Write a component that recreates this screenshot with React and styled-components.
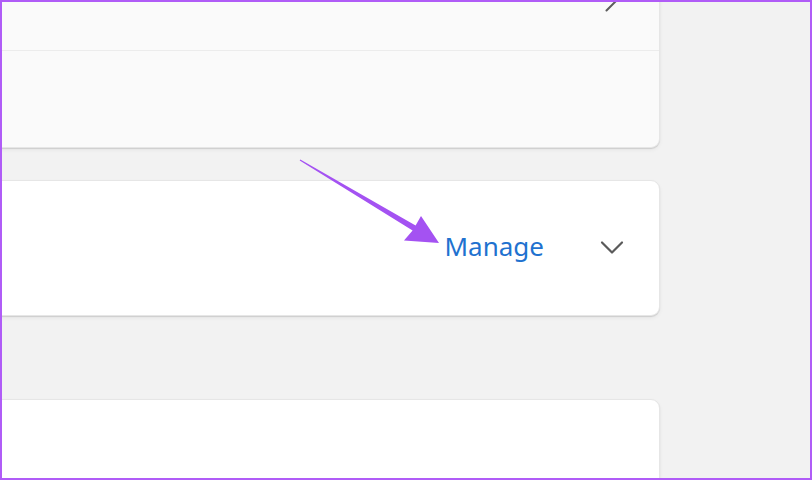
import React from 'react';
import styled, { createGlobalStyle } from 'styled-components';

const GlobalStyle = createGlobalStyle`
  html, body {
    margin: 0;
    padding: 0;
    background: #f2f2f2;
  }
  body {
    font-family: "Noto Sans", "Open Sans", "Liberation Sans", sans-serif;
  }
`;

function ChevronRight() {
  return (
    <svg width="24" height="24" viewBox="0 0 24 24" fill="none">
      <path d="M6.5 1.5 L17 12 L6.5 22.5" stroke="#5c5c5c" strokeWidth="2" strokeLinecap="round" strokeLinejoin="round" />
    </svg>
  );
}

function ChevronDown() {
  return (
    <svg width="24" height="24" viewBox="0 0 24 24" fill="none">
      <path d="M2 6.5 L12 16.5 L22 6.5" stroke="#5a5a5a" strokeWidth="2.2" strokeLinecap="round" strokeLinejoin="round" />
    </svg>
  );
}

function App() {
  return (
    <>
      <GlobalStyle />
      <Styled.Frame>
        <Styled.Column>
          <Styled.Card tone="#fafafa">
            <Styled.Row height={100}>
              <Styled.IconSlot>
                <ChevronRight />
              </Styled.IconSlot>
            </Styled.Row>
            <Styled.Divider />
            <Styled.Row height={96} />
          </Styled.Card>

          <Styled.Card tone="#ffffff" gap={32}>
            <Styled.Row height={134}>
              <Styled.Link href="#">Manage</Styled.Link>
              <Styled.IconSlot>
                <ChevronDown />
              </Styled.IconSlot>
            </Styled.Row>
          </Styled.Card>

          <Styled.Card tone="#ffffff" gap={83}>
            <Styled.Row height={120} />
          </Styled.Card>
        </Styled.Column>

        <Styled.Arrow viewBox="0 0 812 480">
          <path d="M300.3 159.6 L415.6 225.6 L421 216 L439 243 L404 240.5 L412.6 230.4 L299.7 160.4 Z" fill="#a452f2" />
        </Styled.Arrow>
      </Styled.Frame>
    </>
  );
}

const Styled = {
  Frame: styled.div`
    position: relative;
    box-sizing: border-box;
    width: 812px;
    height: 480px;
    border: 2px solid #b05cf7;
    background: #f2f2f2;
    overflow: hidden;
  `,
  Column: styled.div`
    display: flex;
    flex-direction: column;
    width: 680px;
    margin-left: -22px;
    margin-top: -53px;
  `,
  Card: styled.div`
    margin-top: ${p => p.gap || 0}px;
    background: ${p => p.tone};
    border: 1px solid #e6e6e6;
    border-radius: 9px;
    box-shadow: 0 1px 1px rgba(0, 0, 0, 0.12), 0 2px 4px rgba(0, 0, 0, 0.05);
    box-sizing: border-box;
    overflow: hidden;
  `,
  Row: styled.div`
    height: ${p => p.height}px;
    display: flex;
    align-items: center;
    justify-content: flex-end;
    padding-right: 35px;
  `,
  Divider: styled.div`
    height: 1px;
    background: #ececec;
  `,
  Link: styled.a`
    font-size: 26px;
    color: #1f72cf;
    text-decoration: none;
    margin-right: 56px;
    line-height: 1;
    padding-bottom: 4px;
  `,
  IconSlot: styled.div`
    width: 24px;
    height: 24px;
    display: flex;
    align-items: center;
    justify-content: center;
  `,
  Arrow: styled.svg`
    position: absolute;
    left: -2px;
    top: -2px;
    width: 812px;
    height: 480px;
    pointer-events: none;
  `,
};

export default App;
